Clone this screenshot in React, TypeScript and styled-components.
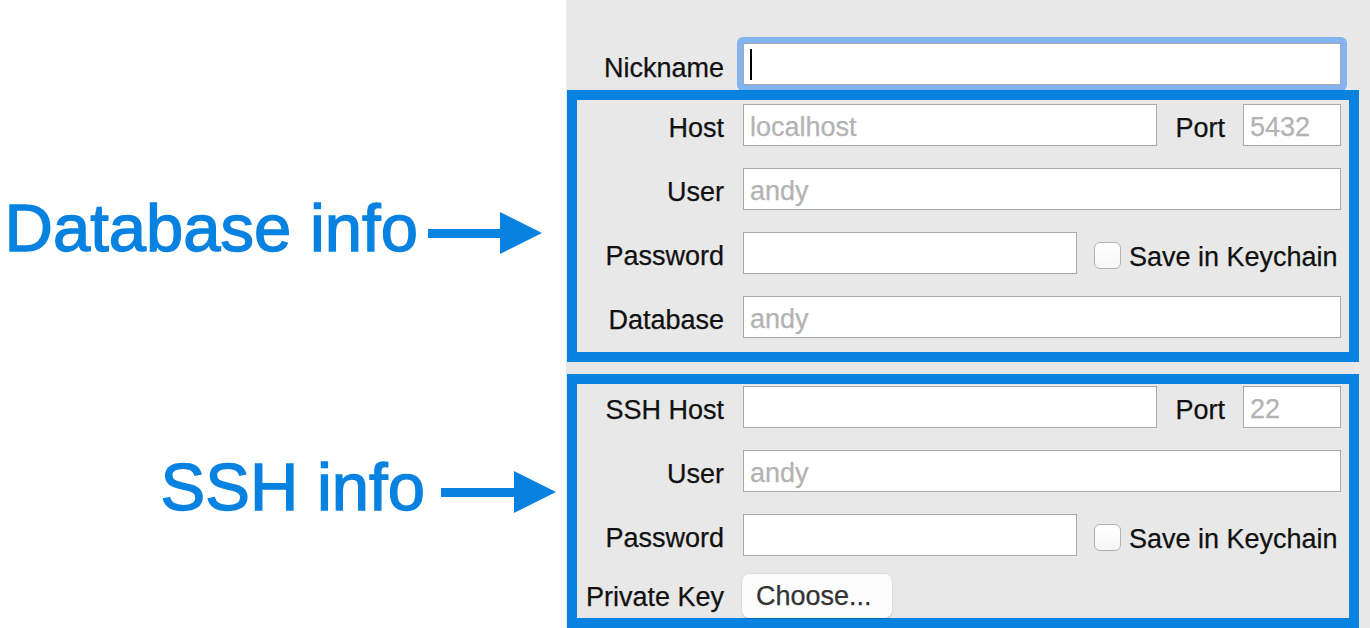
import styled, { createGlobalStyle } from "styled-components";

const GlobalStyle = createGlobalStyle`
  html, body {
    margin: 0;
    padding: 0;
    background: #ffffff;
  }
  body {
    font-family: "Liberation Sans", Arial, Helvetica, sans-serif;
  }
`

const BLUE = "#0882e0";

const Page = styled.div`
  display: flex;
  width: 1370px;
  height: 628px;
  overflow: hidden;
`

const Annotations = styled.div`
  width: 566px;
  flex-shrink: 0;
  display: flex;
  flex-direction: column;
  align-items: flex-end;
  padding-top: 195px;
  gap: 193px;
  box-sizing: border-box;
  background: #ffffff;
`

const Callout = styled.div<{ $inset: number; $gap: number }>`
  display: flex;
  align-items: center;
  gap: ${p => p.$gap}px;
  height: 66px;
  margin-right: ${p => p.$inset}px;
`

const CalloutText = styled.span`
  font-size: 67px;
  line-height: 66px;
  color: ${BLUE};
  -webkit-text-stroke: 1.4px ${BLUE};
  white-space: nowrap;
`

const ArrowSvg = styled.svg`
  margin-top: 9px;
  flex-shrink: 0;
`

const Panel = styled.div`
  flex: 1;
  background: #e8e8e8;
  display: flex;
  flex-direction: column;
  padding: 43px 11px 0 1px;
  box-sizing: border-box;
  font-size: 27px;
  color: #111;
  -webkit-text-stroke: 0.25px currentColor;
`

const Row = styled.div<{ $tall?: boolean }>`
  display: flex;
  align-items: center;
  gap: 18px;
  height: ${p => (p.$tall ? 44 : 42)}px;
`

const NicknameRow = styled(Row)`
  padding-right: 18px;
  margin-bottom: 5px;
`

const Label = styled.label<{ $width: number; $drop?: number }>`
  width: ${p => p.$width}px;
  flex-shrink: 0;
  text-align: right;
  margin-right: 1px;
  padding-top: ${p => p.$drop ?? 6}px;
  white-space: nowrap;
`

const InlineLabel = styled.span`
  padding-top: 6px;
  white-space: nowrap;
`

const Input = styled.input<{ $width?: number }>`
  box-sizing: border-box;
  height: 42px;
  ${p => (p.$width ? `width: ${p.$width}px; flex-shrink: 0;` : "flex: 1; min-width: 0;")}
  border: 1px solid #a8a8a8;
  background: #ffffff;
  padding: 5px 6px 0;
  font-family: inherit;
  font-size: 27px;
  color: #111;
  outline: none;
  &::placeholder {
    color: #b3b3b3;
    opacity: 1;
  }
`

const FocusedField = styled.div`
  flex: 1;
  height: 42px;
  box-sizing: border-box;
  border: 1px solid #a8a8a8;
  background: #ffffff;
  box-shadow: 0 0 0 6px #83b4ef;
  border-radius: 2px;
  display: flex;
  align-items: center;
  padding-left: 6px;
`

const Caret = styled.span`
  width: 2px;
  height: 31px;
  background: #000;
`

const Group = styled.div<{ $top: number; $bottom: number }>`
  border: 10px solid ${BLUE};
  padding: ${p => p.$top}px 8px ${p => p.$bottom}px 0;
  display: flex;
  flex-direction: column;
  gap: 22px;
  & + & {
    margin-top: 12px;
  }
`

const CheckLabel = styled.label`
  display: flex;
  align-items: center;
  gap: 8px;
  margin-left: -1px;
  margin-top: 4px;
  white-space: nowrap;
`

const CheckText = styled.span`
  padding-top: 4px;
`

const CheckBox = styled.span`
  width: 27px;
  height: 27px;
  box-sizing: border-box;
  border: 1px solid #b3b3b3;
  border-radius: 6px;
  background: linear-gradient(#ffffff, #f6f6f6);
`

const ChooseButton = styled.button`
  height: 44px;
  width: 150px;
  margin-left: -1px;
  box-sizing: border-box;
  border: none;
  border-radius: 7px;
  background: #fcfcfc;
  box-shadow: 0 1px 1px rgba(0, 0, 0, 0.18), 0 0 0 0.5px rgba(0, 0, 0, 0.08);
  font-family: inherit;
  font-size: 27px;
  color: #333;
  -webkit-text-stroke: 0.25px #333;
  text-align: left;
  padding: 0 0 0 14px;
`

const Arrow = ({ width, head }: { width: number; head: number }) => (
  <ArrowSvg width={width} height={42} viewBox={`0 0 ${width} 42`}>
    <rect x={0} y={17} width={width - head + 1} height={9} fill={BLUE} />
    <polygon points={`${width - head},0 ${width},21 ${width - head},42`} fill={BLUE} />
  </ArrowSvg>
)

const LABEL_W = 147;

const KeychainCheck = () => (
  <CheckLabel>
    <CheckBox />
    <CheckText>Save in Keychain</CheckText>
  </CheckLabel>
)

export default function App() {
  return (
    <>
      <GlobalStyle />
      <Page>
        <Annotations>
          <Callout $inset={24} $gap={10}>
            <CalloutText>Database info</CalloutText>
            <Arrow width={114} head={42} />
          </Callout>
          <Callout $inset={10} $gap={16}>
            <CalloutText>SSH info</CalloutText>
            <Arrow width={115} head={42} />
          </Callout>
        </Annotations>
        <Panel>
          <NicknameRow>
            <Label $width={LABEL_W + 10} $drop={8}>Nickname</Label>
            <FocusedField>
              <Caret />
            </FocusedField>
          </NicknameRow>

          <Group $top={4} $bottom={14}>
            <Row>
              <Label $width={LABEL_W}>Host</Label>
              <Input placeholder="localhost" />
              <InlineLabel>Port</InlineLabel>
              <Input $width={98} placeholder="5432" />
            </Row>
            <Row>
              <Label $width={LABEL_W}>User</Label>
              <Input placeholder="andy" />
            </Row>
            <Row>
              <Label $width={LABEL_W}>Password</Label>
              <Input $width={334} type="password" />
              <KeychainCheck />
            </Row>
            <Row>
              <Label $width={LABEL_W}>Database</Label>
              <Input placeholder="andy" />
            </Row>
          </Group>

          <Group $top={2} $bottom={0}>
            <Row>
              <Label $width={LABEL_W}>SSH Host</Label>
              <Input />
              <InlineLabel>Port</InlineLabel>
              <Input $width={98} placeholder="22" />
            </Row>
            <Row>
              <Label $width={LABEL_W}>User</Label>
              <Input placeholder="andy" />
            </Row>
            <Row>
              <Label $width={LABEL_W}>Password</Label>
              <Input $width={334} type="password" />
              <KeychainCheck />
            </Row>
            <Row $tall style={{ marginTop: -4 }}>
              <Label $width={LABEL_W} $drop={2}>Private Key</Label>
              <ChooseButton>Choose...</ChooseButton>
            </Row>
          </Group>
        </Panel>
      </Page>
    </>
  );
}
